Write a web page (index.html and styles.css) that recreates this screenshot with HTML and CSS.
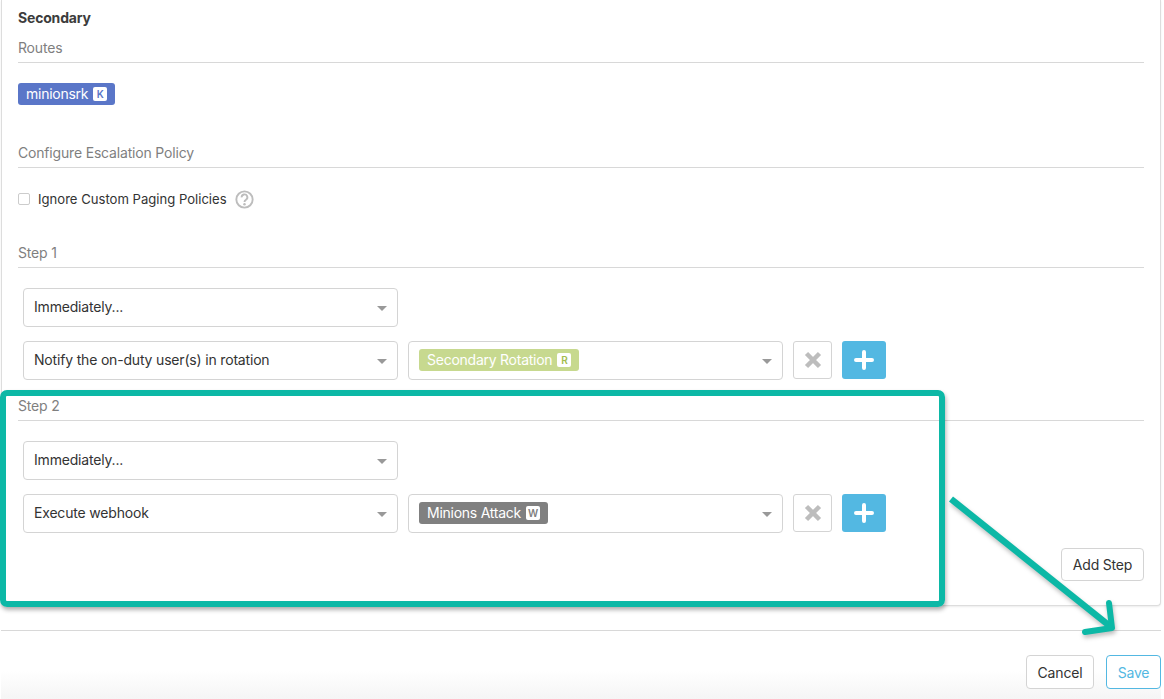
FILE: index.html
```html
<!DOCTYPE html>
<html lang="en">
<head>
<meta charset="utf-8">
<title>Escalation Policy</title>
<link rel="stylesheet" href="styles.css">
</head>
<body>
<main class="page">
  <section class="panel">
    <h2 class="heading">Secondary</h2>
    <div class="title first">Routes</div>
    <div class="tag-line"><span class="tag tag-blue">minionsrk <b class="badge">K</b></span></div>
    <div class="title t-config">Configure Escalation Policy</div>
    <label class="check-row">
      <span class="checkbox"></span>
      <span class="check-label">Ignore Custom Paging Policies</span>
      <svg class="help" viewBox="0 0 20 20" width="19" height="19"><circle cx="10" cy="10" r="8.6" fill="none" stroke="#bdbdbd" stroke-width="2"/><path d="M7 7.8a3 3 0 1 1 4.6 2.4c-1.1.7-1.6 1.1-1.6 2.3" fill="none" stroke="#bdbdbd" stroke-width="2"/><circle cx="10" cy="15" r="1.3" fill="#bdbdbd"/></svg>
    </label>
    <div class="title t-step1">Step 1</div>
    <div class="row r-first"><div class="select"><span>Immediately...</span><i class="caret"></i></div></div>
    <div class="row">
      <div class="select"><span>Notify the on-duty user(s) in rotation</span><i class="caret"></i></div>
      <div class="select"><span class="tag tag-green">Secondary Rotation <b class="badge">R</b></span><i class="caret"></i></div>
      <button class="btn-x"><svg viewBox="0 0 18 18" width="18" height="18"><path d="M2.5 2.5l13 13M15.5 2.5l-13 13" stroke="#bdbdbd" stroke-width="4.5"/></svg></button>
      <button class="btn-plus"><svg viewBox="0 0 22 22" width="22" height="22"><path d="M11 3v16M3 11h16" stroke="#fff" stroke-width="4" stroke-linecap="round"/></svg></button>
    </div>
    <div class="title t-step2">Step 2</div>
    <div class="row r-first"><div class="select"><span>Immediately...</span><i class="caret"></i></div></div>
    <div class="row">
      <div class="select"><span>Execute webhook</span><i class="caret"></i></div>
      <div class="select"><span class="tag tag-gray">Minions Attack <b class="badge">W</b></span><i class="caret"></i></div>
      <button class="btn-x"><svg viewBox="0 0 18 18" width="18" height="18"><path d="M2.5 2.5l13 13M15.5 2.5l-13 13" stroke="#bdbdbd" stroke-width="4.5"/></svg></button>
      <button class="btn-plus"><svg viewBox="0 0 22 22" width="22" height="22"><path d="M11 3v16M3 11h16" stroke="#fff" stroke-width="4" stroke-linecap="round"/></svg></button>
    </div>
    <div class="add-line"><button class="btn btn-add">Add Step</button></div>
  </section>
  <footer class="footer">
    <button class="btn btn-cancel">Cancel</button>
    <button class="btn btn-save">Save</button>
  </footer>
</main>
<div class="callout"></div>
<svg class="arrow" width="1164" height="699" viewBox="0 0 1164 699">
  <path d="M951 499L1111 627" fill="none" stroke="#0cb8a6" stroke-width="6.5"/>
  <path d="M1109 603L1112 628L1085 632" fill="none" stroke="#0cb8a6" stroke-width="6" stroke-linecap="round" stroke-linejoin="round"/>
</svg>
</body>
</html>
```
FILE: styles.css
```css
* { box-sizing: border-box; }
html, body { margin: 0; height: 100%; overflow: hidden; background: #fff; }
body { font-family: "Inter", "Liberation Sans", sans-serif; font-size: 14px; letter-spacing: -.18px; color: #333; position: relative; }
.page { padding-left: 1px; width: 1161px; }
.panel {
  height: 606px;
  padding: 8px 16px 0 16px;
  border: 1px solid #ddd;
  border-top: 0;
  border-radius: 0 0 4px 4px;
  box-shadow: 0 1px 2px rgba(0,0,0,.08);
  background: #fff;
}
.heading { margin: 0; font-size: 14px; line-height: 20px; font-weight: 700; color: #3c3c3c; }
.title { line-height: 20px; padding-bottom: 4px; border-bottom: 1px solid #d8d8d8; color: #7f7f7f; }
.first { margin-top: 10px; }
.t-config { margin-top: 38px; }
.t-step1 { margin-top: 34px; }
.t-step2 { margin-top: 16px; }
.tag-line { margin-top: 20px; height: 22px; display: flex; }
.tag {
  display: inline-flex; align-items: center; gap: 5px;
  height: 22px; padding: 0 8px; border-radius: 3px;
  color: #fff; line-height: 22px; white-space: nowrap; letter-spacing: -.25px;
}
.tag-blue { background: #5a76c8; }
.tag-green { background: #c7d98f; }
.tag-gray { background: #808080; }
.badge {
  width: 14px; height: 14px; border-radius: 2px; background: #fff;
  display: inline-flex; align-items: center; justify-content: center;
  font-size: 10px; font-weight: 600; line-height: 14px; letter-spacing: 0;
}
.tag-blue .badge { color: #5a76c8; }
.tag-green .badge { color: #a3bd4e; }
.tag-gray .badge { color: #808080; }
.check-row { margin-top: 21px; height: 20px; display: flex; align-items: center; }
.check-label { font-size: 13.1px; letter-spacing: 0; }
.checkbox { width: 12px; height: 12px; border: 1px solid #ccc; border-radius: 2px; margin-right: 8px; background: #fff; }
.help { margin-left: 8px; }
.row { display: flex; margin: 14px 0 0 5px; height: 39px; align-items: flex-start; }
.r-first { margin-top: 20px; }
.select {
  width: 375px; height: 39px; margin-right: 10px; padding: 0 10px 2px 10px;
  border: 1px solid #d4d4d4; border-radius: 4px; background: #fff;
  display: flex; align-items: center; justify-content: space-between;
}
.caret { width: 0; height: 0; border-style: solid; border-width: 5px 5px 0; border-color: #999 transparent transparent; margin-top: 3px; }
.btn-x, .btn-plus { height: 38px; padding: 0; display: flex; align-items: center; justify-content: center; border-radius: 3px; cursor: pointer; }
.btn-x { width: 39px; background: #fff; border: 1px solid #d4d4d4; margin-right: 10px; }
.btn-plus { width: 44px; background: #53b8e2; border: 0; }
.add-line { margin-top: 15px; display: flex; justify-content: flex-end; }
.btn {
  height: 33px; padding: 0; background: #fff; border: 1px solid #d4d4d4; border-radius: 4px;
  font: inherit; letter-spacing: inherit; color: #333; cursor: pointer;
}
.btn-add { width: 83px; }
.footer {
  margin-top: 24px; height: 69px; padding-top: 24px;
  border-top: 1px solid #d8d8d8;
  display: flex; justify-content: flex-end; gap: 12px; align-items: flex-start;
  background: linear-gradient(#fff 58%, #f5f5f5);
}
.footer .btn { height: 34px; }
.btn-cancel { width: 68px; }
.btn-save { width: 55px; border-color: #53b8e2; color: #53b8e2; }
.callout {
  position: absolute; left: 0; top: 390px; width: 945px; height: 217px;
  border: 6px solid #0cb8a6; border-radius: 7px;
  box-shadow: 1px 3px 4px rgba(0,0,0,.3);
  pointer-events: none;
}
.arrow { position: absolute; left: 0; top: 0; pointer-events: none; filter: drop-shadow(1px 3px 2px rgba(0,0,0,.25)); }
```
